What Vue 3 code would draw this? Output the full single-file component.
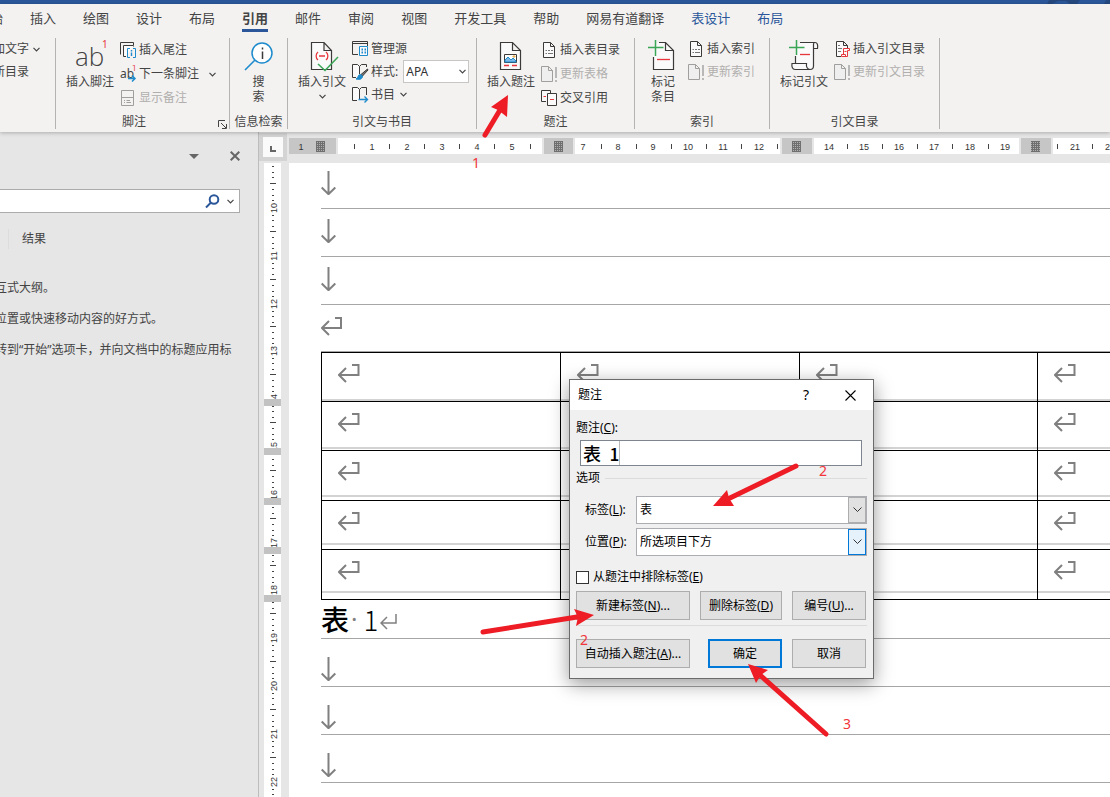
<script setup>
import { ref } from 'vue'

const tabs = [
  { t: '开始' }, { t: '插入' }, { t: '绘图' }, { t: '设计' }, { t: '布局' },
  { t: '引用', active: true }, { t: '邮件' }, { t: '审阅' }, { t: '视图' },
  { t: '开发工具' }, { t: '帮助' }, { t: '网易有道翻译' },
  { t: '表设计', ctx: true }, { t: '布局', ctx: true },
]

const K = '#3b3a39'
const B = '#1e8bcd'
const R = '#e8373c'
const G = '#3aa655'
const Y = '#a19f9d'
const W = '#fafafa'

const updateDoc = [
  { d: 'M.5 1.5H7.5L11.5 5.5V16.5H.5ZM7.5 1.5V5.5H11.5', s: Y, f: '#efefef' },
  { d: 'M15 2V13M15 15V17', s: '#b8b8b8', w: 2 },
]
const listDoc = [
  { d: 'M2.5 1.5H9.5L13.5 5.5V16.5H2.5ZM9.5 1.5V5.5H13.5', s: K, f: W },
  { d: 'M4.5 9.5H6M7 9.5H9M10 9.5H12M4.5 12.5H6M7 12.5H12', s: '#777' },
]

const small = {
  endnote: [
    { d: 'M.5 13.5V1.5H13.5V4', s: K }, { d: 'M6 15.5H3.5V4.5H13.5V5.5', s: K, f: W },
    { d: 'M10 7.5H7.5V16.5H10M13 7.5H15.5V16.5H13', s: B },
    { d: 'M11.5 9V10.5M11.5 11.5V15', s: B, w: 1.4 },
  ],
  notes: [
    { d: 'M1.5 1.5H13.5V16.5H1.5ZM1.5 8.5H13.5', s: Y },
    { d: 'M4 11.5H5M6.5 11.5H10M4 13.5H5M6.5 13.5H11', s: Y },
  ],
  source: [
    { d: 'M15.5 6V1.5H.5V14.5H6', s: K }, { d: 'M.5 3.5H15.5', s: K },
    { d: 'M7.5 6.5H15.5V15.5H7.5Z', s: B, f: W },
    { d: 'M9.5 9.5H11M12.5 9.5H14M9.5 12.5H11M12.5 12.5H14', s: B, w: 2 },
  ],
  style: [
    { d: 'M4 14.5H.5V1.5H5.5L7.5 3.5V11', s: K, f: W },
    { d: 'M7.5 3.5L9.5 1.5H14.5V4', s: K },
    { d: 'M15.5 6L9 11.5L10.5 13L16 7Z', s: K, f: '#777' },
    { d: 'M8.5 11.5C5.5 11.5 7 14.5 4 16C8 17 10.5 16 10.5 13Z', s: B, f: B },
  ],
  biblio: [
    { d: 'M5 14.5H.5V1.5H5.5L7.5 3.5V14', s: K, f: W },
    { d: 'M7.5 3.5L9.5 1.5H14.5V9', s: K },
    { d: 'M6.5 13.5H15.5M12.5 10.5L15.5 13.5L12.5 16.5', s: B, w: 1.4 },
  ],
  list: listDoc,
  update: updateDoc,
  cross: [
    { d: 'M5 12.5H.5V1.5H9.5V4', s: K, f: W }, { d: 'M2.5 7.5H5', s: R },
    { d: 'M6.5 4.5H15.5V16.5H6.5Z', s: K, f: W }, { d: 'M9 10.5H13', s: R },
  ],
  toa: [
    { d: 'M7 16.5H2.5V1.5H9.5L13.5 5.5V8M9.5 1.5V5.5H13.5', s: K, f: W },
    { d: 'M4 5.5H6M4 8.5H8M4 11.5H7', s: '#777' },
    { d: 'M9.5 14V8.5H15.5V10.5H13.5V16.5H7.5V14.5H11.5V16.5', s: R, f: W },
    { d: 'M10.5 11.5H12.5', s: R },
  ],
}

const big = {
  search: [
    { d: 'M28 13A10 10 0 1 1 8 13A10 10 0 1 1 28 13', s: B, f: '#fff', w: 1.5 },
    { d: 'M11 20L1 30', s: B, w: 1.6 },
    { d: 'M18.5 7.5V9.5M18.5 11.5V19', s: K, w: 1.5 },
  ],
  citation: [
    { d: 'M5.5 2.5H18L25.5 10.5V29.5H5.5ZM18 2.5V10.5H25.5', s: K, f: W, w: 1.2 },
    { d: 'M12 12C9.5 14 9.5 18 12 20M20 12C22.5 14 22.5 18 20 20M13 16H19', s: R, w: 1.3 },
    { d: 'M12 24L19 30.5L32 17', s: G, w: 1.5 },
  ],
  caption: [
    { d: 'M5.5 2.5H17.5L25.5 10.5V29.5H5.5ZM17.5 2.5V10.5H25.5', s: K, f: W, w: 1.2 },
    { d: 'M9.5 14.5H21.5V22.5H9.5Z', s: K, f: '#fff' },
    { d: 'M10 20L13 17L16 20L18 18L21 21V22H10Z', s: B, f: '#7db9e8' },
    { d: 'M18 16H20V17H18Z', s: '#e8a33d' },
    { d: 'M9 25.5H14M17 25.5H22', s: R, w: 1.3 },
  ],
  entry: [
    { d: 'M10 2.5H18.5L26.5 10.5V29.5H6.5V12Z', s: 'none', f: W },
    { d: 'M6.5 17V29.5H26.5V10.5L18.5 2.5H12M18.5 2.5V10.5H26.5', s: K, w: 1.2 },
    { d: 'M10 19.5H23', s: R, w: 1.3 }, { d: 'M1 7.5H16.5M8.5 0V16', s: G, w: 1.5 },
  ],
  markcite: [
    { d: 'M12 2.5H27C29.5 2.5 30 5 29.5 8.5H25.5V26C25.5 28.5 24.500 29.5 22 29.5H7C4.500 29.5 3.500 27 4 23.500H7.500V12Z', s: 'none', f: W },
    { d: 'M12 2.5H27C29.5 2.5 30 5 29.5 8.5H25.5M25.5 8.5V4C25.5 3 26 2.5 27 2.5M25.5 8.5V26C25.5 28.5 24.5 29.5 22 29.5M7.5 16V23.5M22 29.5H7C4.5 29.5 3.5 27 4 23.5H18.5C18 27 19.5 29.5 22 29.5', s: K, w: 1.2 },
    { d: 'M12 14.5H22', s: R, w: 1.3 }, { d: 'M1 7.5H16.5M8.5 0V15', s: G, w: 1.5 },
  ],
}

const groups = [
  {
    id: 'footnote', label: '脚注', launcher: true, tall: true,
    big: { icon: 'ab', lines: ['插入脚注'] },
    rows: [{ i: 'endnote', t: '插入尾注' }, { i: 'next', t: '下一条脚注', drop: true }, { i: 'notes', t: '显示备注', off: true }],
  },
  { id: 'research', label: '信息检索', big: { icon: 'search', lines: ['搜', '索'] } },
  {
    id: 'citation', label: '引文与书目',
    big: { icon: 'citation', lines: ['插入引文'], drop: true },
    rows: [{ i: 'source', t: '管理源' }, { i: 'style', t: '样式:', select: true }, { i: 'biblio', t: '书目', drop: true }],
  },
  {
    id: 'caption', label: '题注', tall: true,
    big: { icon: 'caption', lines: ['插入题注'] },
    rows: [{ i: 'list', t: '插入表目录' }, { i: 'update', t: '更新表格', off: true }, { i: 'cross', t: '交叉引用' }],
  },
  {
    id: 'index', label: '索引', big: { icon: 'entry', lines: ['标记', '条目'] },
    rows: [{ i: 'list', t: '插入索引' }, { i: 'update', t: '更新索引', off: true }],
  },
  {
    id: 'authorities', label: '引文目录', big: { icon: 'markcite', lines: ['标记引文'] },
    rows: [{ i: 'toa', t: '插入引文目录' }, { i: 'update', t: '更新引文目录', off: true }],
  },
]

const hNumbers = [
  [12, 1], [83, 1], [118, 2], [153, 3], [188, 4], [223, 5],
  [294, 7], [329, 8], [364, 9], [399, 10], [434, 11], [470, 12],
  [540, 14], [575, 15], [610, 16], [645, 17], [681, 18], [716, 19], [786, 21], [821, 22],
]
const hTicks = [65, 100, 135, 170, 205, 241, 312, 347, 382, 417, 452, 488, 558, 593, 628, 663, 699, 768, 803]
const hPages = [[49, 204], [286, 205], [525, 205]]
const hStops = [[255, 29], [493, 30], [732, 30]]
const hHatch = [27, 265, 503, 742]

const vNumbers = Array.from({ length: 13 }, (_, k) => ({ n: 10 + k, y: Math.round(45 + 47.8 * k) }))
const vBars = [236, 285, 335, 384, 432]

const tableRows = [1, 2, 3, 4, 5]
const citeStyle = ref('APA')
const caption = ref('表 1')
const label = ref('表')
const place = ref('所选项目下方')
const exclude = ref(false)

const arrows = [
  { from: [485, 135], to: [500, 110], head: '508,95 491,107 498,110 507,117' },
  { from: [796, 466], to: [730, 498], head: '713,506 727,490 729,498 734,506' },
  { from: [483, 632], to: [577, 617], head: '594,615 574,609 578,617 576,626' },
  { from: [826, 734], to: [760, 675], head: '748,664 768,670 761,675 756,683' },
]
const marks = [[476, 168, 1], [823, 476, 2], [584, 645, 2], [847, 729, 3]]
</script>

<template>
  <div class="word">
    <div class="titlebar">
      <svg class="deco" width="64" height="4" aria-hidden="true"><path d="M3 0H34L31 4H24L20 1H12L6 4H1ZM60 0H64V4H58Z" fill="#25497f" /></svg>
    </div>
    <header class="ribbon">
      <nav class="tabs" aria-label="功能区选项卡">
        <button v-for="(t, i) in tabs" :key="i" type="button" class="tab" :class="{ active: t.active, ctx: t.ctx }">{{ t.t }}</button>
      </nav>
      <div class="groups">
        <section class="group toc">
          <button type="button" class="cmd">加文字
            <svg class="chev" width="7" height="5"><path d="M.5 .8L3.500 3.800L6.500 .8" /></svg>
          </button>
          <button type="button" class="cmd">新目录</button>
        </section>
        <section v-for="g in groups" :key="g.id" class="group" :class="[g.id, { tall: g.tall }]">
          <div class="group-body">
            <button type="button" class="big">
              <svg v-if="g.big.icon === 'ab'" width="32" height="32" aria-hidden="true">
                <text x="1" y="26" class="ab-big">ab</text><text x="28" y="8" class="one">1</text>
              </svg>
              <svg v-else width="32" height="32" aria-hidden="true">
                <path v-for="(p, k) in big[g.big.icon]" :key="k" :d="p.d" :stroke="p.s" :fill="p.f || 'none'" :stroke-width="p.w || 1" />
              </svg>
              <span v-for="l in g.big.lines" :key="l">{{ l }}</span>
              <svg v-if="g.big.drop" class="chev drop" width="7" height="5"><path d="M.5 .8L3.500 3.800L6.500 .8" /></svg>
            </button>
            <div v-if="g.rows" class="rows">
              <component :is="r.select ? 'div' : 'button'" v-for="r in g.rows" :key="r.t" :type="r.select ? null : 'button'" class="cmd" :disabled="r.off || null">
                <svg v-if="r.i === 'next'" width="18" height="18" aria-hidden="true">
                  <text x="0" y="13" class="ab-small">ab</text><text x="12" y="6" class="one-small">1</text>
                  <path d="M8 13.500H15M12 10.500L15 13.500L12 16.500" stroke="#1e8bcd" stroke-width="1.500" fill="none" />
                </svg>
                <svg v-else width="18" height="18" aria-hidden="true">
                  <path v-for="(p, k) in small[r.i]" :key="k" :d="p.d" :stroke="p.s" :fill="p.f || 'none'" :stroke-width="p.w || 1" />
                </svg>
                <label v-if="r.select" for="cite-style">{{ r.t }}</label>
                <span v-else>{{ r.t }}</span>
                <span v-if="r.select" class="combo cite">
                  <select id="cite-style" v-model="citeStyle"><option>APA</option></select>
                  <svg class="chev" width="7" height="5"><path d="M.5 .8L3.500 3.800L6.500 .8" /></svg>
                </span>
                <svg v-if="r.drop" class="chev" width="7" height="5"><path d="M.5 .8L3.500 3.800L6.500 .8" /></svg>
              </component>
            </div>
          </div>
          <footer class="group-name">
            <span>{{ g.label }}</span>
            <button v-if="g.launcher" type="button" class="launcher" aria-label="脚注和尾注">
              <svg width="9" height="9"><path d="M.5 7V.5H7M3 3L8 8M8.500 4V8.500H4" stroke="#444" fill="none" /></svg>
            </button>
          </footer>
        </section>
      </div>
    </header>

    <div class="workspace">
      <aside class="pane">
        <div class="pane-head">
          <button type="button" aria-label="任务窗格选项"><svg width="10" height="5"><path d="M0 0H10L5 5Z" fill="#666" /></svg></button>
          <button type="button" aria-label="关闭"><svg width="10" height="10"><path d="M.7 .7L9.300 9.300M9.300 .7L.7 9.300" stroke="#666" stroke-width="2" /></svg></button>
        </div>
        <div class="search">
          <input type="text" aria-label="搜索文档">
          <svg width="15" height="15" aria-hidden="true"><circle cx="9" cy="5.500" r="4.300" /><path d="M6 8.500L1 13.500" /></svg>
          <svg class="chev" width="7" height="5"><path d="M.5 .8L3.500 3.800L6.500 .8" /></svg>
        </div>
        <button type="button" class="result-tab">结果</button>
        <div class="hints">
          <p>互式大纲。</p>
          <p>位置或快速移动内容的好方式。</p>
          <p>转到“开始”选项卡，并向文档中的标题应用标</p>
        </div>
      </aside>

      <main class="editor">
        <div class="corner"><button type="button" aria-label="制表符"><svg width="6" height="6"><path d="M1 0V5H6" stroke="#666" stroke-width="2" fill="none" /></svg></button></div>
        <svg class="hruler" aria-label="水平标尺">
          <defs>
            <pattern id="grid" width="2" height="2" patternUnits="userSpaceOnUse"><rect width="2" height="2" fill="#6f6f6f" /><rect width="1" height="1" fill="#b0b0b0" /></pattern>
          </defs>
          <rect x="0" y="6" width="47" height="16" fill="#c6c6c6" />
          <rect v-for="p in hPages" :key="'p' + p[0]" :x="p[0]" y="6" :width="p[1]" height="16" fill="#fff" />
          <rect x="764" y="6" width="100%" height="16" fill="#fff" />
          <rect v-for="p in hStops" :key="'s' + p[0]" :x="p[0]" y="6" :width="p[1]" height="16" fill="#c6c6c6" />
          <rect v-for="x in hHatch" :key="'h' + x" :x="x" y="9" width="9" height="11" fill="url(#grid)" />
          <rect v-for="x in hTicks" :key="'t' + x" :x="x" y="12" width="1" height="5" fill="#444" />
          <text v-for="n in hNumbers" :key="'n' + n[0]" :x="n[0]" y="18">{{ n[1] }}</text>
        </svg>
        <svg class="vruler" aria-label="垂直标尺">
          <rect x="5" y="0" width="17" height="100%" fill="#fff" />
          <g v-for="v in vNumbers" :key="v.n" :transform="`translate(14 ${v.y})`">
            <path d="M-3 -24.500H3M-1 -18.500H1M-1 -12.500H1M-1 -7.500H1M-1 7.500H1M-1 12.500H1M-1 18.500H1" stroke="#444" />
            <text transform="rotate(-90)" x="0" y="4">{{ v.n }}</text>
          </g>
          <path d="M13 3.500H15M13 9.500H15M13 14.500H15" stroke="#444" />
          <rect v-for="y in vBars" :key="y" x="5" :y="y" width="17" height="7" fill="#c2c2c2" />
        </svg>

        <article class="page">
          <div v-for="n in 3" :key="n" class="line lead">
            <svg width="16" height="24"><path d="M7.500 0V23M.7 16.500L7.500 23.200L14.300 16.500" /></svg>
          </div>
          <div class="line para">
            <svg width="21" height="19"><path d="M14 1H20V11H1M8 4L1 11L8 18" /></svg>
          </div>
          <table>
            <tbody>
              <tr v-for="r in tableRows" :key="r">
                <td v-for="c in 4" :key="c"><svg width="22" height="19"><path d="M14 1H20.500V11H1M8 4L1 11L8 18" /></svg></td>
              </tr>
            </tbody>
          </table>
          <div class="line caption-line">
            <span class="cap">表</span><span class="dot">·</span><span class="cap num">1</span>
            <svg width="17" height="16"><path d="M16 0V9H1M7 3L1 9L7 15" /></svg>
          </div>
          <div v-for="n in 3" :key="'b' + n" class="line tail">
            <svg width="16" height="24"><path d="M7.500 0V23M.7 16.500L7.500 23.200L14.300 16.500" /></svg>
          </div>
        </article>
      </main>
    </div>

    <form class="dialog" role="dialog" aria-labelledby="dlg-title" @submit.prevent>
      <div class="dlg-title">
        <h2 id="dlg-title">题注</h2>
        <button type="button" class="help" aria-label="帮助">?</button>
        <button type="button" aria-label="关闭"><svg width="11" height="11"><path d="M.5 .5L10.500 10.500M10.500 .5L.5 10.500" stroke="#000" stroke-width="1.100" /></svg></button>
      </div>
      <div class="dlg-body">
        <label class="cap-label" for="cap">题注(<u>C</u>):</label>
        <input id="cap" v-model="caption" class="cap-input" type="text">
        <div class="legend"><span>选项</span></div>
        <div class="field">
          <label for="lab">标签(<u>L</u>):</label>
          <span class="combo"><select id="lab" v-model="label"><option>表</option></select>
            <span class="arrow"><svg width="9" height="6"><path d="M.5 .5L4.500 4.500L8.500 .5" /></svg></span></span>
        </div>
        <div class="field">
          <label for="pos">位置(<u>P</u>):</label>
          <span class="combo"><select id="pos" v-model="place"><option>所选项目下方</option></select>
            <span class="arrow hot"><svg width="9" height="6"><path d="M.5 .5L4.500 4.500L8.500 .5" /></svg></span></span>
        </div>
        <label class="check"><input v-model="exclude" type="checkbox"><span>从题注中排除标签(<u>E</u>)</span></label>
        <div class="btns upper">
          <button type="button">新建标签(<u>N</u>)...</button>
          <button type="button">删除标签(<u>D</u>)</button>
          <button type="button">编号(<u>U</u>)...</button>
        </div>
        <div class="btns lower">
          <button type="button">自动插入题注(<u>A</u>)...</button>
          <button type="submit" class="ok">确定</button>
          <button type="button">取消</button>
        </div>
      </div>
    </form>

    <svg class="notes" aria-hidden="true">
      <g v-for="(a, i) in arrows" :key="i">
        <line :x1="a.from[0]" :y1="a.from[1]" :x2="a.to[0]" :y2="a.to[1]" />
        <polygon :points="a.head" />
      </g>
      <text v-for="m in marks" :key="m[0]" :x="m[0]" :y="m[1]">{{ m[2] }}</text>
    </svg>
  </div>
</template>

<style>
body { margin: 0; background: #e6e6e6; }
</style>

<style scoped>
.word {
  position: relative; display: flex; flex-direction: column; height: 100vh; overflow: hidden;
  background: #e6e6e6; color: #444; font: 12px/16px "Noto Sans", "Noto Sans CJK SC", sans-serif;
}
* { box-sizing: border-box; }
svg { display: block; flex: none; }
button { padding: 0; border: 0; background: none; color: inherit; font: inherit; white-space: nowrap; }
select, input { font: inherit; color: inherit; border-radius: 0; }
.chev path { fill: none; stroke: #444; stroke-width: 1.2; }

.titlebar { display: flex; justify-content: flex-end; height: 4px; background: #2b579a; flex: none; }
.ribbon { background: #f3f2f1; box-shadow: 0 1px 4px rgba(0, 0, 0, .25); z-index: 1; flex: none; }
.tabs { display: flex; gap: 27px; margin-left: -23px; height: 28px; }
.tab { height: 28px; padding-top: 3px; border-bottom: 3px solid transparent; font-size: 13px; line-height: 22px; }
.tab.active { border-color: #2b579a; font-weight: 700; }
.tab.ctx { color: #2b579a; }

.groups { display: flex; height: 100px; padding: 6px 0 3px; }
.group { display: flex; flex-direction: column; border-right: 1px solid #b5b3b1; flex: none; }
.group-body { display: flex; flex: 1; gap: 6px; padding-left: 10px; }
.toc { width: 56px; }
.toc .cmd { margin-left: -7px; gap: 0; }
.toc .cmd:first-child { height: 22px; }
.footnote { width: 174px; }
.research { width: 58px; }
.research .group-body { padding: 0; justify-content: center; }
.research .big svg { margin-left: 2px; }
.citation { width: 189px; }
.caption { width: 158px; }
.index { width: 135px; }
.index .group-body { padding-left: 9px; }
.authorities { width: 170px; }
.big { display: flex; flex-direction: column; align-items: center; align-self: flex-start; padding-top: 2px; line-height: 15px; width: 48px; }
.index .big { width: 38px; }
.big svg { margin-bottom: 2px; overflow: visible; }
.big .drop { margin-top: 5px; }
.rows { display: flex; flex-direction: column; }
.cmd { display: flex; align-items: center; gap: 1px; height: 23px; }
.rows .cmd:first-child { height: 22px; }
.tall .rows .cmd { height: 24px; }
.cmd .chev { margin-left: 4px; }
.footnote .cmd .chev { margin-left: 9px; }
.cmd:disabled { color: #b1afad; }
.ab-big { font: 26px "Open Sans", "Noto Sans", sans-serif; font-weight: 300; fill: #444; }
.one { font: 10px "Noto Sans", sans-serif; fill: #e8373c; }
.ab-small { font: 12px "Noto Sans", sans-serif; fill: #444; }
.one-small { font: 8px "Noto Sans", sans-serif; fill: #e8373c; }
.group-name { position: relative; height: 14px; line-height: 14px; text-align: center; }
.footnote .group-name { padding-right: 17px; }
.launcher { position: absolute; right: 2px; bottom: 0; }

.combo { display: grid; align-items: center; }
.combo > * { grid-area: 1 / 1; }
.combo select { appearance: none; width: 100%; height: 100%; border: 1px solid #abadb3; background: #fff; }
.combo > svg, .combo > .arrow { justify-self: end; pointer-events: none; }
.cite { width: 66px; height: 23px; margin-left: 4px; }
.cite select { padding: 0 2px; border-color: #c8c6c4; color: #333; }
.cite .chev { margin: 0 3px 0 0; }

.workspace { display: flex; flex: 1; min-height: 0; }
.pane { width: 259px; flex: none; border-right: 1px solid #bdbdbd; overflow: hidden; }
.pane-head { display: flex; justify-content: flex-end; align-items: center; gap: 31px; height: 48px; padding-right: 18px; }
.search { display: flex; align-items: center; gap: 7px; height: 24px; margin: 9px 18px 0 -2px; padding-right: 5px; background: #fff; border: 1px solid #ababab; }
.search input { flex: 1; min-width: 0; height: 100%; border: 0; outline: 0; }
.search svg:not(.chev) { fill: none; stroke: #2b579a; stroke-width: 2; }
.result-tab { display: block; height: 20px; margin: 16px 0 0 8px; padding-left: 13px; border-left: 1px solid #dcdcdc; }
.hints { margin: 23px 0 0 -5px; }
.hints p { margin: 0; line-height: 31px; white-space: nowrap; }

.editor { display: grid; grid-template: 31px 1fr / 30px 1fr; flex: 1; min-width: 0; }
.corner { width: 28px; height: 28px; margin-top: 1px; padding: 4px; background: #d4d4d4; }
.corner button { display: grid; place-items: center; width: 20px; height: 20px; padding-top: 4px; background: #fafafa; }
.hruler { width: 100%; height: 31px; }
.vruler { width: 30px; height: 100%; }
.hruler text, .vruler text { font: 9px "Liberation Sans", sans-serif; fill: #333; text-anchor: middle; }

.page { padding-left: 32px; background: #fff; overflow: hidden; min-width: 0; }
.page svg { fill: none; stroke: #808080; stroke-width: 2; }
.line { display: flex; align-items: flex-end; height: 48px; border-bottom: 1px solid #a6a6a6; }
.lead { padding-bottom: 13px; }
.lead:first-child { height: 46px; }
.para { height: 47px; padding-bottom: 15px; }
.tail { padding-bottom: 5px; }
table {
  width: 956px; table-layout: fixed; border-collapse: collapse;
  background: repeating-linear-gradient(transparent 0 47px, #a6a6a6 47px 48px);
}
td { height: 49px; padding: 11px 0 0 16px; border: 1px solid #000; vertical-align: top; }
tr:nth-child(3) td, tr:nth-child(5) td { height: 50px; }
.caption-line { height: 39px; color: #000; line-height: 38px; align-items: center; }
.caption-line svg { align-self: flex-end; margin: 0 0 8px 2px; stroke-width: 1.5; }
.cap { font-family: "Noto Sans CJK SC", sans-serif; font-size: 28px; font-weight: 500; }
.num { font-feature-settings: "hwid"; font-weight: 300; }
.dot { width: 15px; padding-left: 2px; font-size: 24px; color: #808080; }

.dialog {
  position: absolute; left: 569px; top: 379px; width: 305px; border: 1px solid #6b6b6b;
  background: #f0f0f0; color: #000; box-shadow: 0 5px 18px rgba(0, 0, 0, .4);
}
.dlg-title { display: flex; align-items: center; gap: 36px; height: 30px; padding: 0 17px 0 8px; background: #fff; }
h2 { flex: 1; margin: 0; font: inherit; }
.help { font-size: 14px; }
.dlg-body { padding: 9px 6px 10px; }
.cap-label { display: block; line-height: 18px; }
.cap-input {
  display: block; width: 282px; height: 26px; margin: 3px 0 0 4px; padding: 0 2px; border: 1px solid #7f858f; outline: 0;
  font: 500 18px "Noto Sans CJK SC", sans-serif; font-feature-settings: "hwid";
  background: linear-gradient(#bbb, #bbb) 38px 0 / 1px 100% no-repeat #fff;
}
.legend { display: flex; align-items: center; gap: 5px; height: 24px; }
.legend::after { content: ""; flex: 1; height: 1px; background: #dcdcdc; }
.field { display: grid; grid-template-columns: 51px 1fr; align-items: center; margin: 6px 0 0 9px; }
.field + .field { margin-top: 4px; }
.field .combo { height: 28px; }
.field select { padding: 0 3px; }
.arrow { display: grid; place-items: center; width: 18px; height: 26px; margin-right: 1px; background: #e1e1e1; border: 1px solid #adadad; }
.arrow.hot { background: #e5f1fb; border-color: #0078d7; }
.arrow path { fill: none; stroke: #333; }
.check { display: flex; align-items: center; gap: 4px; height: 16px; margin-top: 13px; }
.check input { appearance: none; width: 13px; height: 13px; margin: 0; border: 1px solid #333; background: #fff; }
.btns { display: grid; gap: 10px; padding-right: 1px; }
.upper { grid-template-columns: 114px 82px 1fr; margin-top: 6px; }
.lower { grid-template-columns: 114px 1fr 74px; margin-top: 5px; padding-top: 13px; border-top: 1px solid #dcdcdc; }
.btns button { height: 29px; border: 1px solid #adadad; background: #e1e1e1; }
.btns .ok { margin-left: 8px; border: 2px solid #0078d7; }

.notes { position: absolute; inset: 0; width: 100%; height: 100%; pointer-events: none; z-index: 2; }
.notes line { stroke: #ee1c25; stroke-width: 5; stroke-linecap: round; }
.notes polygon { fill: #ee1c25; }
.notes text { font: 14px "Noto Sans", sans-serif; fill: #f0353b; text-anchor: middle; }
</style>
